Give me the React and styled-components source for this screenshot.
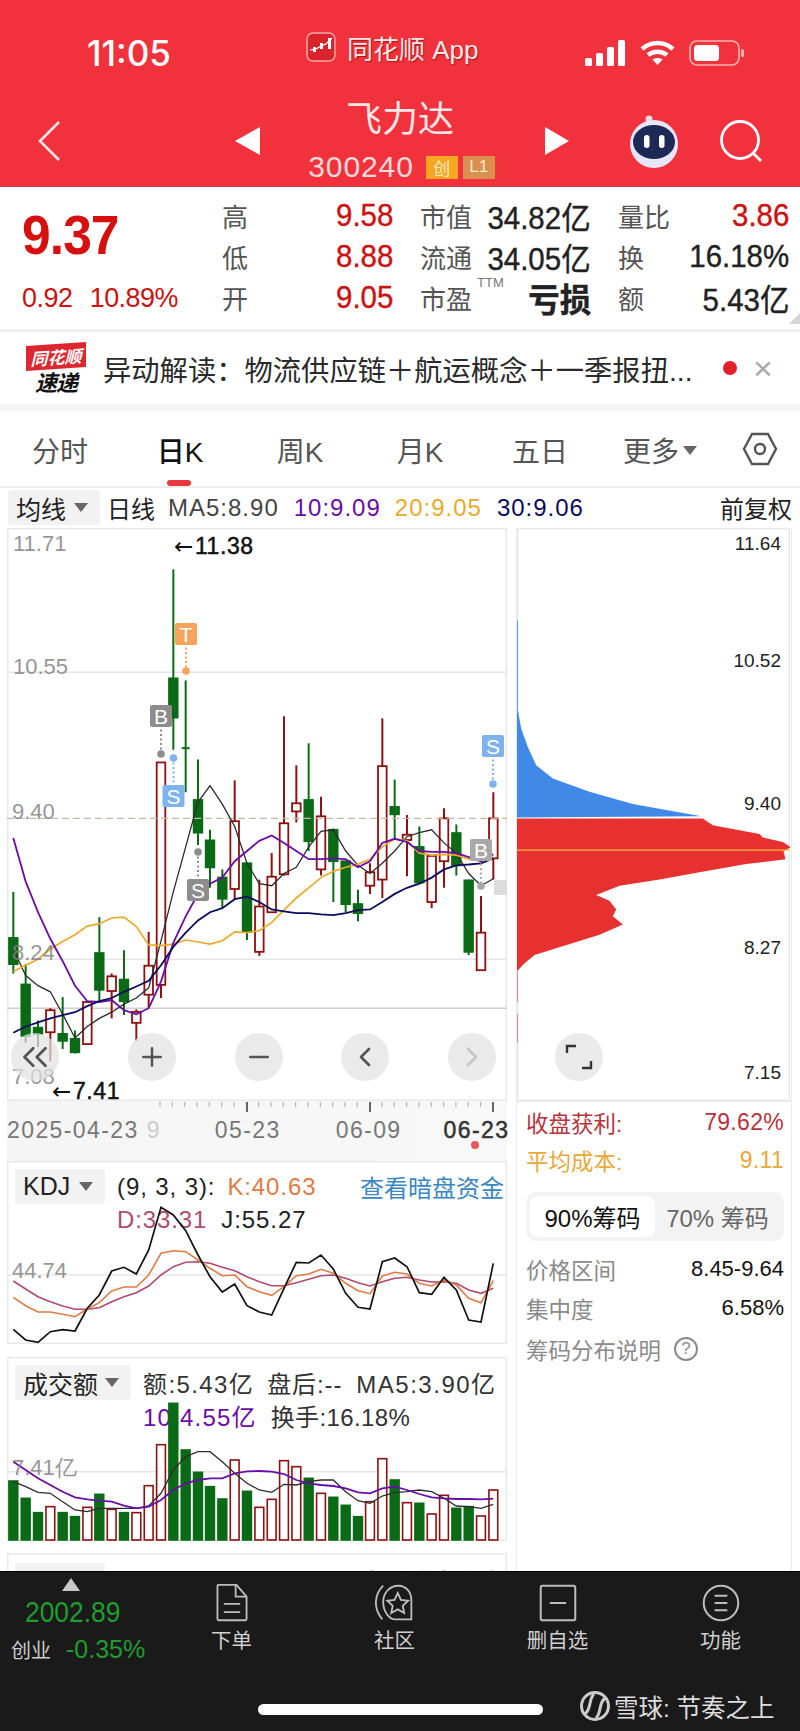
import React from 'react';
import styled, { createGlobalStyle } from 'styled-components';
import { Plus, Minus, ChevronLeft, ChevronRight, ChevronsLeft } from 'lucide-react';

const CJK = '"Liberation Sans", "Noto Sans CJK SC", sans-serif';

const Global = createGlobalStyle`
  html, body { margin: 0; padding: 0; background: #fff; }
  body { font-family: ${CJK}; }
  * { box-sizing: border-box; }
`;

const Page = styled.div`
  width: 800px; height: 1731px; display: flex; flex-direction: column; overflow: hidden; position: relative;
  background: #fff; color: #222;
`;

/* ---------- header ---------- */
const Header = styled.header`
  height: 187px; background: #f1323c; color: #fff; display: flex; flex-direction: column;
  border-bottom: 1px solid #c9434a;
`;
const StatusBar = styled.div`
  height: 96px; padding: 10px 0 0 87px; display: flex; align-items: center;
`;
const Clock = styled.div`
  font: 500 35px Inter, "Liberation Sans", sans-serif; width: 219px; color: #fff;
`;
const AppLabel = styled.div`
  display: flex; align-items: center; gap: 11px; width: 279px; margin-bottom: 12px; font-size: 26px; color: #fbeaea;
  text-shadow: 1px 1px 1px rgba(120, 0, 0, .6);
`;
const AppIcon = styled.svg`width: 30px; height: 30px; flex: none;`;
const StatusIcons = styled.div`display: flex; align-items: center; gap: 14px;`;
const Nav = styled.div`height: 90px; display: flex; align-items: center;`;
const BackSlot = styled.div`width: 235px; padding-left: 36px; display: flex;`;
const Tri = styled.div`
  width: 0; height: 0; border-top: 14px solid transparent; border-bottom: 14px solid transparent;
  ${p => p.$dir === 'left' ? 'border-right: 25px solid #fff;' : 'border-left: 24px solid #fff; margin-left: 5px;'}
`;
const TitleCol = styled.div`width: 280px; display: flex; flex-direction: column; align-items: center; gap: 9px; padding-top: 1px;`;
const Title = styled.div`font-size: 36px; line-height: 42px; color: #fde6e6;`;
const CodeRow = styled.div`display: flex; align-items: center; height: 34px; padding-left: 8px;`;
const Code = styled.span`font-size: 30px; letter-spacing: .9px; color: #fbdada; margin-right: 12px; font-family: "Liberation Sans", sans-serif;`;
const Badge = styled.span`
  width: 32px; height: 23px; margin-right: 5px; display: flex; align-items: center; justify-content: center; font-size: 17px;
  background: ${p => p.$bg}; color: #fde9c8;
`;
const RobotWrap = styled.svg`width: 52px; height: 56px; margin-left: 59px; flex: none;`;
const SearchWrap = styled.svg`width: 44px; height: 44px; margin-left: 39px; flex: none;`;

/* ---------- quote ---------- */
const Quote = styled.section`
  height: 145px; display: flex; border-bottom: 3px solid #eeeeee; position: relative;
`;
const PriceCol = styled.div`width: 222px; padding: 20px 0 0 22px; display: flex; flex-direction: column;`;
const Price = styled.div`
  font: 700 56px/56px "Liberation Sans", sans-serif; color: #d60f0f; letter-spacing: -1px; transform: scaleX(.92); transform-origin: left;
`;
const SubRow = styled.div`
  margin-top: 21px; height: 28px; display: flex; gap: 18px; font: 400 28px/28px "Liberation Sans", sans-serif; color: #cc1111;
  letter-spacing: -.5px; transform-origin: left; transform: scaleX(.96);
`;
const QuoteGrid = styled.div`
  display: grid; grid-template-columns: 171px 171px 171px; column-gap: 27px; grid-auto-rows: 41px; padding-top: 8px;
`;
const Cell = styled.div`display: flex; justify-content: space-between; align-items: center; position: relative;`;
const QLabel = styled.span`font-size: 26px; color: #555;`;
const QVal = styled.span`
  font: ${p => p.$bold ? 700 : 400} ${p => p.$bold ? 33 : 31}px "Liberation Sans", "Noto Sans CJK SC", sans-serif; color: ${p => p.$red ? '#cc1111' : '#222'};
  transform: scaleX(.95); transform-origin: right; white-space: nowrap; -webkit-text-stroke: .4px currentColor;
`;
const Sup = styled.sup`position: absolute; left: 57px; top: -1px; font-size: 13px; color: #777; line-height: 14px;`;
const Corner = styled.div`
  position: absolute; right: 0; bottom: 5px; width: 0; height: 0; border-left: 11px solid transparent; border-bottom: 11px solid #d6d6d6;
`;

/* ---------- news ---------- */
const News = styled.section`
  height: 72px; display: flex; align-items: center; padding-left: 25px; position: relative;
`;
const Logo = styled.div`width: 62px; margin-right: 16px; display: flex; flex-direction: column; align-items: center;`;
const LogoTag = styled.div`
  width: 60px; height: 25px; background: #dc2731; color: #fff; font: italic 700 17px/25px "Noto Sans CJK SC", sans-serif;
  text-align: center; transform: skewY(-4deg); white-space: nowrap;
`;
const LogoSub = styled.div`font: italic 700 22px/24px "Noto Sans CJK SC", sans-serif; color: #111; white-space: nowrap; letter-spacing: -1px;`;
const NewsText = styled.div`font-size: 28.3px; color: #2a2a2a; white-space: nowrap; width: 600px;`;
const NewsDot = styled.span`width: 14px; height: 14px; background: #e2202c; border-radius: 50%; margin-left: 20px; flex: none;`;
const NewsClose = styled.span`font: 300 34px/34px "Liberation Sans", sans-serif; color: #aaa; margin-left: 16px;`;
const Spacer = styled.div`height: 7px; background: #f5f5f5; flex: none;`;

/* ---------- tabs ---------- */
const Tabs = styled.nav`height: 77px; display: flex; border-bottom: 2px solid #eeeeee; flex: none;`;
const Tab = styled.div`
  width: 120px; height: 75px; padding-top: 3px; display: flex; align-items: center; justify-content: center; position: relative;
  font-size: 28px; color: ${p => p.$active ? '#111' : '#555'}; font-weight: ${p => p.$active ? 500 : 400};
  ${p => p.$active && `&::after { content: ''; position: absolute; left: 47px; bottom: 0; width: 24px; height: 6px; border-radius: 3px; background: #e8373f; }`}
`;
const Caret = styled.span`
  display: inline-block; width: 0; height: 0; margin-left: ${p => p.$ml || 4}px; border-left: 7px solid transparent; border-right: 7px solid transparent; border-top: 9px solid #666;
`;
const HexSlot = styled.div`width: 80px; display: flex; align-items: center; justify-content: center;`;

/* ---------- toolbar ---------- */
const Toolbar = styled.div`
  height: 40px; padding: 2px 8px 3px; display: flex; align-items: center; flex: none; font: 400 24px "Liberation Sans", "Noto Sans CJK SC", sans-serif;
`;
const Chip = styled.div`
  width: ${p => p.$w}px; height: 35px; background: #f2f2f2; border-radius: 3px; display: flex; align-items: center; justify-content: space-between;
  padding: 0 ${p => p.$pr || 12}px 0 8px; font-size: 25px; color: #222; flex: none;
`;
const TbText = styled.span`
  margin-left: ${p => p.$ml}px; color: ${p => p.$c || '#222'}; letter-spacing: ${p => p.$ls ?? 1}px; white-space: nowrap;
  ${p => p.$auto && 'margin-left: auto;'}
`;

/* ---------- main ---------- */
const Main = styled.main`flex: 1; min-height: 0; overflow: hidden; display: flex; padding-left: 7px; gap: 9px;`;
const LeftCol = styled.div`width: 500px; display: flex; flex-direction: column; flex: none;`;
const RightCol = styled.div`width: 276px; display: flex; flex-direction: column; flex: none; border: 1.5px solid #eaeaea; border-width: 0 1.5px;`;
const ChartBox = styled.div`
  width: ${p => p.$w || 500}px; height: 573px; position: relative; flex: none; box-shadow: inset 0 0 0 1.5px #e9e9e9;
`;
const FullSvg = styled.svg`position: absolute; left: 0; top: 0; pointer-events: none;`;
const AxisLabel = styled.span`
  position: absolute; left: ${p => p.$x}px; top: ${p => p.$y}px; transform: translateY(-50%); font: 400 ${p => p.$s || 22}px "Liberation Sans", sans-serif;
  color: ${p => p.$c || 'rgba(130,130,130,.85)'}; white-space: nowrap; ${p => p.$bold && '-webkit-text-stroke: .5px currentColor; letter-spacing: .6px;'}
`;
const ArrowGlyph = styled.span`font-family: "DejaVu Sans", sans-serif; -webkit-text-stroke: 0; margin-right: 1px;`;
const RightLabel = styled.span`
  position: absolute; right: 9px; top: ${p => p.$y}px; transform: translateY(-50%); font: 400 19px "Liberation Sans", sans-serif; color: #222;
`;
const BtnRow = styled.div`position: absolute; left: 4px; top: 505px; width: 485px; display: flex; justify-content: space-between;`;
const RoundBtn = styled.div`
  width: 48px; height: 48px; border-radius: 50%; background: rgba(226, 226, 226, .72); display: flex; align-items: center; justify-content: center; color: ${p => p.$c || '#555'};
  ${p => p.$mr && `margin-right: ${p.$mr}px;`}
  ${p => p.$abs && `position: absolute; left: 38px; top: 505px;`}
`;
const DateAxis = styled.div`height: 60px; flex: none; position: relative; background: linear-gradient(90deg, #f5f5f5, #f8f8f8);`;
const TickSvg = styled.svg`display: block;`;
const DateRow = styled.div`display: flex; height: 34px; align-items: center; font: 400 23px/34px "Liberation Sans", sans-serif; letter-spacing: 1.4px; color: #777;`;
const DateText = styled.span`
  margin-left: ${p => p.$ml || 0}px; color: ${p => p.$c || '#777'}; ${p => p.$strong && '-webkit-text-stroke: .5px currentColor;'} white-space: nowrap;
`;
const RedDot = styled.span`position: absolute; left: 464px; top: 40px; width: 8px; height: 8px; border-radius: 50%; background: #e8565c;`;

const Panel = styled.div`
  width: 500px; height: ${p => p.$h}px; flex: none; position: relative; box-shadow: inset 0 0 0 1.5px #e9e9e9; margin-bottom: ${p => p.$mb || 0}px;
  padding: ${p => p.$pt ?? 8}px 0 0 8px; display: flex; font: 400 24px "Liberation Sans", "Noto Sans CJK SC", sans-serif;
`;
const PanelText = styled.div`display: flex; flex-direction: column; flex: 1; padding: 1px 3px 0 ${p => p.$pl}px;`;
const PanelRow = styled.div`display: flex; height: 33px; align-items: center; white-space: nowrap;`;
const PText = styled.span`color: ${p => p.$c || '#222'}; letter-spacing: ${p => p.$ls ?? .9}px; margin-left: ${p => p.$ml || 0}px; ${p => p.$auto && 'margin-left: auto;'}`;

/* ---------- right stats ---------- */
const Stats = styled.div`
  border-top: 1.5px solid #eaeaea; padding: 0 7px 0 9px; flex: 1; font: 400 22.5px "Liberation Sans", "Noto Sans CJK SC", sans-serif;
`;
const StatRow = styled.div`
  height: ${p => p.$h}px; display: flex; justify-content: space-between; align-items: center; color: ${p => p.$c}; ${p => p.$top && `margin-top: ${p.$top}px;`}
`;
const StatVal = styled.span`color: ${p => p.$c || 'inherit'}; letter-spacing: ${p => p.$ls ?? .3}px; font-size: ${p => p.$s || 23}px;`;
const Seg = styled.div`
  height: 49px; margin: 13px 0 8px; background: #f3f3f3; border-radius: 10px; padding: 4px; display: flex; align-items: center; font-size: 24px;
`;
const SegItem = styled.div`
  width: 127px; height: 41px; border-radius: 8px; display: flex; align-items: center; justify-content: center; white-space: nowrap;
  ${p => p.$on ? 'background: #fff; color: #111;' : 'color: #666; margin-left: 0;'}
`;
const HelpRow = styled.div`display: flex; align-items: center; gap: 13px; color: #8a8a8a; height: 42px; padding-top: 2px;`;
const HelpIcon = styled.span`
  width: 24px; height: 24px; border-radius: 50%; border: 2px solid #8a8a8a; font-size: 17px; line-height: 20px; text-align: center;
`;

/* ---------- footer ---------- */
const Footer = styled.footer`
  height: 160px; background: #1a1a1a; flex: none; position: relative; display: flex; align-items: flex-start; border-top: 1px solid #000;
`;
const StockCol = styled.div`width: 150px; flex: none; position: relative; padding-top: 6px;`;
const FootTri = styled.div`
  width: 0; height: 0; margin-left: 62px; border-left: 9px solid transparent; border-right: 9px solid transparent; border-bottom: 13px solid #c8c8c8;
`;
const IndexVal = styled.div`
  margin: 1px 0 0 25px; font: 400 30px/40px "Liberation Sans", sans-serif; color: #1f9d2e; transform: scaleX(.88); transform-origin: left; white-space: nowrap;
`;
const IndexSub = styled.div`display: flex; align-items: center; padding-left: 11px; margin-top: 2px; height: 30px; white-space: nowrap;`;
const IndexName = styled.span`font-size: 20px; color: #ccc; flex: none;`;
const IndexPct = styled.span`font: 400 25px "Liberation Sans", sans-serif; color: #1f9d2e; margin-left: 15px;`;
const FootItem = styled.div`
  width: 163px; flex: none; display: flex; flex-direction: column; align-items: center; padding-top: 11px; color: #d0d0d0; font-size: 20.5px;
`;
const FootIcon = styled.svg`width: 40px; height: 40px; display: block; margin-bottom: 2px;`;
const FootLabel = styled.span`line-height: 32px; height: 32px;`;
const HomeBar = styled.div`
  position: absolute; left: 258px; top: 132px; width: 285px; height: 11px; border-radius: 6px; background: #fff;
`;
const Watermark = styled.div`
  position: absolute; left: 580px; top: 112px; display: flex; align-items: center; gap: 4px; font-size: 24.5px; color: #ddd; white-space: nowrap;
`;

/* ---------- data (traced from the picture) ---------- */
const X0 = [40, 77, 114, 151, 188, 225, 262, 298, 335, 372, 409, 446, 483, 520, 557, 594, 630, 667, 704, 741, 778, 815, 852, 889, 926, 963, 1000, 1037, 1074, 1110, 1147, 1184, 1221, 1258, 1295, 1332, 1369, 1406, 1443, 1480];
const X = i => X0[i] / 3;
const MY = v => 500 + v / 2.45;
const LY = v => 1140 + v / 3;
const CANDLES = [
  ['g', 960, 1073, 1137, 1160], ['g', 1137, 1187, 1313, 1330], ['g', 1275, 1293, 1308, 1340], ['r', 1245, 1250, 1304, 1375], ['g', 1218, 1308, 1325, 1345],
  ['g', 1300, 1320, 1353, 1356], ['r', 1228, 1230, 1333, 1335], ['g', 1022, 1110, 1200, 1228], ['r', 1160, 1167, 1203, 1270], ['g', 1103, 1175, 1228, 1262],
  ['r', 1248, 1254, 1281, 1325], ['r', 1058, 1141, 1212, 1245], ['r', 643, 643, 1188, 1220], ['g', 170, 437, 533, 612], ['g', 442, 608, 611, 716],
  ['g', 636, 735, 815, 845], ['g', 808, 834, 900, 950], ['g', 905, 925, 977, 1000], ['r', 687, 787, 953, 978], ['g', 888, 890, 1058, 1078],
  ['r', 930, 996, 1107, 1117], ['r', 865, 923, 1010, 1012], ['r', 530, 792, 917, 920], ['r', 650, 743, 763, 790], ['g', 596, 735, 836, 860],
  ['r', 727, 775, 905, 920], ['g', 805, 808, 885, 985], ['g', 885, 885, 990, 1010], ['g', 955, 990, 1012, 1032], ['r', 890, 912, 945, 965],
  ['r', 535, 652, 930, 975], ['g', 685, 752, 770, 828], ['r', 772, 820, 833, 922], ['g', 800, 850, 937, 940], ['r', 870, 872, 985, 1000],
  ['r', 755, 780, 885, 950], ['g', 795, 816, 895, 920], ['g', 930, 932, 1107, 1115], ['r', 970, 1060, 1152, 1153], ['r', 716, 780, 878, 930],
];
const MA5 = [1100, 1165, 1190, 1205, 1260, 1318, 1290, 1270, 1255, 1235, 1220, 1195, 1080, 960, 850, 740, 700, 745, 800, 890, 940, 945, 915, 900, 850, 812, 808, 860, 895, 915, 890, 860, 825, 815, 808, 840, 865, 915, 945, 928];
const MA10 = [828, 935, 1010, 1075, 1130, 1190, 1228, 1230, 1225, 1250, 1260, 1245, 1180, 1085, 1020, 965, 940, 925, 885, 860, 835, 822, 840, 860, 880, 880, 878, 880, 900, 885, 840, 830, 838, 860, 862, 862, 865, 875, 885, 868];
const MA20 = [1155, 1140, 1125, 1100, 1082, 1065, 1044, 1038, 1024, 1022, 1045, 1090, 1092, 1088, 1078, 1083, 1088, 1080, 1058, 1060, 1055, 1035, 1005, 975, 950, 925, 910, 900, 892, 880, 850, 830, 835, 865, 870, 868, 870, 880, 885, 875];
const MA30 = [1305, 1290, 1280, 1270, 1262, 1255, 1240, 1228, 1220, 1205, 1192, 1178, 1140, 1095, 1060, 1030, 1010, 1000, 978, 972, 985, 1003, 1008, 1012, 1012, 1015, 1017, 1012, 1005, 1003, 985, 965, 950, 940, 925, 905, 895, 893, 890, 878];
const KJ = [568, 600, 607, 575, 569, 573, 505, 465, 393, 382, 402, 330, 202, 225, 272, 345, 410, 456, 432, 497, 516, 525, 445, 367, 369, 345, 387, 460, 502, 507, 365, 354, 380, 458, 463, 412, 450, 540, 546, 370];
const KK = [472, 497, 516, 516, 523, 530, 507, 488, 453, 441, 441, 405, 340, 332, 335, 360, 385, 407, 405, 440, 455, 466, 440, 407, 402, 388, 400, 430, 452, 461, 408, 397, 402, 430, 438, 420, 435, 475, 488, 422];
const KD = [423, 447, 470, 485, 498, 508, 508, 503, 485, 470, 458, 438, 405, 380, 367, 365, 370, 382, 392, 410, 425, 437, 437, 428, 418, 407, 405, 415, 428, 438, 425, 415, 412, 420, 426, 425, 430, 450, 460, 445];
const VOL = [['g', 1023], ['g', 1075], ['g', 1118], ['r', 1100], ['g', 1118], ['g', 1130], ['r', 1102], ['g', 1063], ['r', 1108], ['g', 1118], ['r', 1118], ['r', 1037], ['r', 914], ['g', 790], ['g', 930], ['g', 997], ['g', 1040], ['g', 1077], ['r', 960], ['g', 1054], ['r', 1102], ['r', 1078], ['r', 962], ['r', 980], ['g', 1015], ['r', 1060], ['g', 1072], ['g', 1096], ['g', 1130], ['r', 1085], ['r', 956], ['g', 1020], ['r', 1088], ['g', 1090], ['r', 1122], ['r', 1066], ['g', 1105], ['g', 1100], ['r', 1128], ['r', 1050]];
const V5 = [1025, 1040, 1057, 1060, 1085, 1110, 1115, 1105, 1105, 1105, 1105, 1098, 1060, 990, 950, 935, 935, 965, 1000, 1030, 1050, 1057, 1033, 1035, 1025, 1020, 1020, 1055, 1082, 1090, 1068, 1058, 1055, 1050, 1055, 1075, 1098, 1100, 1105, 1093];
const V10 = [965, 990, 1015, 1035, 1055, 1072, 1078, 1082, 1085, 1097, 1105, 1100, 1080, 1050, 1030, 1020, 1015, 1015, 1000, 994, 993, 995, 1002, 1020, 1030, 1035, 1038, 1045, 1057, 1060, 1045, 1040, 1050, 1062, 1072, 1075, 1077, 1077, 1078, 1076];

const GREEN = '#0b6a16';
const DRED = '#8e1010';
const line = (arr, fy, start = 0) => arr.map((v, i) => `${X(i + start).toFixed(1)},${fy(v).toFixed(1)}`).join(' ');
const pts = (arr, fy) => arr.map(([a, b]) => `${(500 + a / 3).toFixed(1)},${fy(b).toFixed(1)}`).join(' ');

const Marker = ({ x, tagY, dotY, letter, fill }) => {
  const top = Math.min(tagY, dotY);
  const bottom = Math.max(tagY, dotY);
  return (
    <g>
      <line x1={x} x2={x} y1={top} y2={bottom} stroke={fill} strokeWidth="2" strokeDasharray="2 2.5" />
      <circle cx={x} cy={dotY} r="3.8" fill={fill} />
      <rect x={x - 11} y={tagY - 11} width="22" height="22" rx="2" fill={fill} />
      <text x={x} y={tagY + 7.5} fontSize="21" textAnchor="middle" fill="#fff" fontFamily="Liberation Sans, sans-serif">{letter}</text>
    </g>
  );
};

const Candles = () => (
  <>
    {CANDLES.map(([t, hi, top, bot, lo], i) => {
      const x = X(i);
      const c = t === 'g' ? GREEN : DRED;
      const isDoji = bot - top < 6;
      return (
        <g key={i}>
          <line x1={x} x2={x} y1={MY(hi)} y2={MY(lo)} stroke={c} strokeWidth="2" />
          {isDoji ? (
            <line x1={x - 4} x2={x + 4} y1={MY(top)} y2={MY(top)} stroke={c} strokeWidth="2" />
          ) : (
            <rect x={x - 4.3} y={MY(top)} width="8.6" height={MY(bot) - MY(top)} fill={t === 'g' ? c : '#fff'} stroke={c} strokeWidth="1.8" />
          )}
        </g>
      );
    })}
  </>
);

const MainChart = () => (
  <ChartBox>
    <FullSvg width="500" height="573" viewBox="7 528 500 573">
      <line x1="7" x2="507" y1={MY(422)} y2={MY(422)} stroke="#e6e6e6" strokeWidth="1.5" />
      <line x1="7" x2="507" y1={MY(1125)} y2={MY(1125)} stroke="#e6e6e6" strokeWidth="1.5" />
      <line x1="7" x2="507" y1={MY(1245)} y2={MY(1245)} stroke="#cfcfcf" strokeWidth="1.5" />
      <rect x="494" y="880" width="13" height="15" fill="#dcdcdc" />
      <Candles />
      <line x1="7" x2="507" y1={MY(780)} y2={MY(780)} stroke="#c9b8a2" strokeWidth="1.2" strokeDasharray="7 4" />
      <polyline points={line(MA5, MY)} fill="none" stroke="#2c2c2c" strokeWidth="1.3" />
      <polyline points={line(MA20, MY)} fill="none" stroke="#e9aa2c" strokeWidth="1.7" />
      <polyline points={line(MA10, MY)} fill="none" stroke="#6a0ca8" strokeWidth="1.8" />
      <polyline points={line(MA30, MY)} fill="none" stroke="#0b0b5e" strokeWidth="1.8" />
      <Marker x={161} tagY={716} dotY={754} letter="B" fill="#8d8d8d" />
      <Marker x={173.5} tagY={796} dotY={758} letter="S" fill="#7fb3ec" />
      <Marker x={186} tagY={634} dotY={671} letter="T" fill="#f6a35e" />
      <Marker x={198} tagY={890} dotY={852} letter="S" fill="#8d8d8d" />
      <Marker x={481} tagY={850} dotY={886} letter="B" fill="#a8a8a8" />
      <Marker x={493} tagY={746} dotY={784} letter="S" fill="#7fb3ec" />
    </FullSvg>
    <AxisLabel $x={6} $y={16}>11.71</AxisLabel>
    <AxisLabel $x={6} $y={139}>10.55</AxisLabel>
    <AxisLabel $x={5} $y={284}>9.40</AxisLabel>
    <AxisLabel $x={5} $y={425}>8.24</AxisLabel>
    <AxisLabel $x={5} $y={549}>7.08</AxisLabel>
    <AxisLabel $x={167} $y={18} $c="#111" $bold $s={23}><ArrowGlyph>←</ArrowGlyph>11.38</AxisLabel>
    <AxisLabel $x={45} $y={563} $c="#111" $bold $s={23}><ArrowGlyph>←</ArrowGlyph>7.41</AxisLabel>
    <BtnRow>
      <RoundBtn $mr={10}><ChevronsLeft size={42} strokeWidth={1.6} /></RoundBtn>
      <RoundBtn><Plus size={30} strokeWidth={2} /></RoundBtn>
      <RoundBtn><Minus size={30} strokeWidth={2} /></RoundBtn>
      <RoundBtn><ChevronLeft size={32} strokeWidth={2} /></RoundBtn>
      <RoundBtn $c="#c6c6c6"><ChevronRight size={32} strokeWidth={2} /></RoundBtn>
    </BtnRow>
  </ChartBox>
);

const Ticks = () => (
  <TickSvg width="500" height="12" viewBox="7 1101 500 12">
    {Array.from({ length: 28 }, (_, i) => {
      const x = 160 + i * 12.33;
      return <line key={i} x1={x} x2={x} y1="1102" y2="1107" stroke="#b5b5b5" strokeWidth="1.2" />;
    })}
    {[247, 370, 493].map(x => <line key={x} x1={x} x2={x} y1="1102" y2="1112" stroke="#666" strokeWidth="2" />)}
  </TickSvg>
);

const KdjPanel = () => (
  <Panel $h={183} $mb={13}>
    <Chip $w={90}>KDJ<Caret /></Chip>
    <PanelText $pl={12}>
      <PanelRow>
        <PText>(9, 3, 3):</PText>
        <PText $c="#e07b45" $ml={12}>K:40.63</PText>
        <PText $c="#3b86c4" $auto $ls={0}>查看暗盘资金</PText>
      </PanelRow>
      <PanelRow>
        <PText $c="#b04a6e">D:33.31</PText>
        <PText $ml={14}>J:55.27</PText>
      </PanelRow>
    </PanelText>
    <FullSvg width="500" height="183" viewBox="7 1161 500 183">
      <line x1="7" x2="507" y1={LY(405)} y2={LY(405)} stroke="#e6e6e6" strokeWidth="1.5" />
      <polyline points={line(KD, LY)} fill="none" stroke="#b04a6e" strokeWidth="1.6" />
      <polyline points={line(KK, LY)} fill="none" stroke="#e07b45" strokeWidth="1.6" />
      <polyline points={line(KJ, LY)} fill="none" stroke="#111" strokeWidth="1.7" />
    </FullSvg>
    <AxisLabel $x={5} $y={110}>44.74</AxisLabel>
  </Panel>
);

const VolPanel = () => (
  <Panel $h={184} $mb={12}>
    <Chip $w={116}>成交额<Caret /></Chip>
    <PanelText $pl={12}>
      <PanelRow>
        <PText $c="#333" $ls={1.4}>额:5.43亿</PText>
        <PText $c="#333" $ml={13}>盘后:--</PText>
        <PText $c="#333" $ml={14} $ls={1.5}>MA5:3.90亿</PText>
      </PanelRow>
      <PanelRow>
        <PText $c="#6a0ca8" $ls={1.2}>10:4.55亿</PText>
        <PText $c="#333" $ml={14} $ls={.4}>换手:16.18%</PText>
      </PanelRow>
    </PanelText>
    <FullSvg width="500" height="184" viewBox="7 1357 500 184">
      <line x1="7" x2="507" y1={LY(995)} y2={LY(995)} stroke="#e6e6e6" strokeWidth="1.5" />
      {VOL.map(([t, top], i) => (
        <rect key={i} x={X(i) - 4.4} y={LY(top)} width="8.8" height={LY(1200) - LY(top)} fill={t === 'g' ? GREEN : '#fff'} stroke={t === 'g' ? GREEN : DRED} strokeWidth="1.6" />
      ))}
      <polyline points={line(V5, LY)} fill="none" stroke="#2c2c2c" strokeWidth="1.3" />
      <polyline points={line(V10, LY)} fill="none" stroke="#6a0ca8" strokeWidth="1.8" />
    </FullSvg>
    <AxisLabel $x={5} $y={111}>7.41亿</AxisLabel>
  </Panel>
);

const BLUE_PTS = [[52, 778], [52, 295], [55, 295], [55, 515], [65, 560], [85, 605], [110, 650], [160, 682], [270, 715], [400, 745], [605, 775]];
const RED_PTS = [[52, 780], [610, 780], [640, 797], [780, 818], [790, 827], [850, 838], [874, 851], [852, 860], [858, 880], [740, 892], [600, 912], [480, 930], [360, 945], [290, 968], [330, 982], [350, 1003], [340, 1020], [370, 1040], [300, 1065], [105, 1115], [75, 1135], [52, 1155]];

const ChipChart = () => (
  <ChartBox $w={273}>
    <FullSvg width="273" height="573" viewBox="517.5 528 273 573">
      <polygon points={pts(BLUE_PTS, MY)} fill="#4189e6" />
      <polygon points={pts(RED_PTS, MY)} fill="#e73030" />
      <line x1="517.3" x2="517.3" y1={MY(1155)} y2={MY(1230)} stroke="#b8585c" strokeWidth="1.6" />
      <line x1="517.3" x2="517.3" y1={MY(1260)} y2={MY(1330)} stroke="#b8585c" strokeWidth="1.6" />
      <line x1="517" x2="790" y1={MY(858)} y2={MY(858)} stroke="#f3b63a" strokeWidth="1.3" />
    </FullSvg>
    <RightLabel $y={16}>11.64</RightLabel>
    <RightLabel $y={133}>10.52</RightLabel>
    <RightLabel $y={276}>9.40</RightLabel>
    <RightLabel $y={420}>8.27</RightLabel>
    <RightLabel $y={545}>7.15</RightLabel>
    <RoundBtn $abs>
      <svg width="30" height="30" viewBox="0 0 30 30" fill="none" stroke="#333" strokeWidth="2.4">
        <path d="M3 11V4h9M27 19v7h-9" />
      </svg>
    </RoundBtn>
  </ChartBox>
);

const StatsBlock = () => (
  <Stats>
    <StatRow $h={38} $c="#b8323c" $top={1}><span>收盘获利:</span><StatVal>79.62%</StatVal></StatRow>
    <StatRow $h={38} $c="#e8a83a"><span>平均成本:</span><StatVal>9.11</StatVal></StatRow>
    <Seg>
      <SegItem $on>90%筹码</SegItem>
      <SegItem>70% 筹码</SegItem>
    </Seg>
    <StatRow $h={39} $c="#8a8a8a"><span>价格区间</span><StatVal $c="#111" $ls={0} $s={22}>8.45-9.64</StatVal></StatRow>
    <StatRow $h={39} $c="#8a8a8a"><span>集中度</span><StatVal $c="#111" $ls={0} $s={22}>6.58%</StatVal></StatRow>
    <HelpRow><span>筹码分布说明</span><HelpIcon>?</HelpIcon></HelpRow>
  </Stats>
);

const Cells = [
  ['高', '9.58', true], ['市值', '34.82亿'], ['量比', '3.86', true],
  ['低', '8.88', true], ['流通', '34.05亿'], ['换', '16.18%'],
  ['开', '9.05', true], ['市盈', '亏损'], ['额', '5.43亿'],
];

export default function App() {
  return (
    <Page>
      <Global />
      <Header>
        <StatusBar>
          <Clock>11:05</Clock>
          <AppLabel>
            <AppIcon viewBox="0 0 30 30">
              <rect x="1" y="1" width="28" height="28" rx="6" fill="#d9242e" stroke="#f7a9a9" strokeWidth="1.5" />
              <polyline points="4,18 10,17 15,14 20,12 26,6" fill="none" stroke="#fff" strokeWidth="1.2" />
              <rect x="7" y="15" width="3" height="5" fill="#fff" /><rect x="14" y="11" width="3" height="6" fill="#fff" /><rect x="22" y="6" width="3" height="11" fill="#fff" />
            </AppIcon>
            同花顺 App
          </AppLabel>
          <StatusIcons>
            <svg width="41" height="26" viewBox="0 0 41 26" fill="#fff">
              <rect x="0" y="18" width="7" height="8" rx="1.5" /><rect x="11" y="13" width="7" height="13" rx="1.5" />
              <rect x="22" y="7" width="7" height="19" rx="1.5" /><rect x="33" y="0" width="7" height="26" rx="1.5" />
            </svg>
            <svg width="35" height="26" viewBox="0 0 35 26" fill="none" stroke="#fff" strokeWidth="4.5">
              <path d="M2 9C11 1 24 1 33 9" /><path d="M8 15C13.500 10.500 21.500 10.500 27 15" />
              <path d="M17.500 25L12.500 19.500C15.500 17.500 19.500 17.500 22.500 19.500Z" fill="#fff" stroke="none" />
            </svg>
            <svg width="56" height="26" viewBox="0 0 56 26" fill="none">
              <rect x="1" y="1" width="49" height="24" rx="7" stroke="#f7b4b4" strokeWidth="1.6" />
              <rect x="5" y="5" width="25" height="16" rx="3.500" fill="#fff" />
              <rect x="52" y="9" width="3" height="8" rx="1.500" fill="#f7b4b4" />
            </svg>
          </StatusIcons>
        </StatusBar>
        <Nav>
          <BackSlot>
            <svg width="26" height="44" viewBox="0 0 26 44" fill="none" stroke="#fde6e6" strokeWidth="2.6"><path d="M23 3L4 22l19 19" /></svg>
          </BackSlot>
          <Tri $dir="left" />
          <TitleCol>
            <Title>飞力达</Title>
            <CodeRow>
              <Code>300240</Code>
              <Badge $bg="#f5a623">创</Badge>
              <Badge $bg="#d9904f">L1</Badge>
            </CodeRow>
          </TitleCol>
          <Tri $dir="right" />
          <RobotWrap viewBox="0 0 52 56">
            <circle cx="21" cy="6" r="3.500" fill="#f6d8e8" />
            <path d="M21 8 L24 14" stroke="#f6d8e8" strokeWidth="2" />
            <circle cx="26" cy="31" r="24" fill="#e8e6fb" />
            <ellipse cx="26" cy="29" rx="21" ry="17" fill="#1c2a55" />
            <rect x="16" y="22" width="5.500" height="13" rx="2.700" fill="#fff" />
            <rect x="31" y="22" width="5.500" height="13" rx="2.700" fill="#fff" />
          </RobotWrap>
          <SearchWrap viewBox="0 0 44 44" fill="none" stroke="#fff" strokeWidth="2.8">
            <circle cx="21" cy="21" r="18.500" /><path d="M34 34l8 8" />
          </SearchWrap>
        </Nav>
      </Header>

      <Quote>
        <PriceCol>
          <Price>9.37</Price>
          <SubRow><span>0.92</span><span>10.89%</span></SubRow>
        </PriceCol>
        <QuoteGrid>
          {Cells.map(([l, v, red], i) => (
            <Cell key={i}>
              <QLabel>{l}</QLabel>
              {l === '市盈' && <Sup>TTM</Sup>}
              <QVal $red={red} $bold={l === '市盈'}>{v}</QVal>
            </Cell>
          ))}
        </QuoteGrid>
        <Corner />
      </Quote>

      <News>
        <Logo>
          <LogoTag>同花顺</LogoTag>
          <LogoSub>速递</LogoSub>
        </Logo>
        <NewsText>异动解读：物流供应链＋航运概念＋一季报扭...</NewsText>
        <NewsDot />
        <NewsClose>×</NewsClose>
      </News>
      <Spacer />

      <Tabs>
        <Tab>分时</Tab>
        <Tab $active>日K</Tab>
        <Tab>周K</Tab>
        <Tab>月K</Tab>
        <Tab>五日</Tab>
        <Tab>更多<Caret /></Tab>
        <HexSlot>
          <svg width="36" height="36" viewBox="0 0 36 36" fill="none" stroke="#555" strokeWidth="2.4">
            <path d="M10 3h16l8 15-8 15H10L2 18z" /><circle cx="18" cy="18" r="5" />
          </svg>
        </HexSlot>
      </Tabs>

      <Toolbar>
        <Chip $w={92}>均线<Caret /></Chip>
        <TbText $ml={7} $ls={0}>日线</TbText>
        <TbText $ml={13} $c="#444">MA5:8.90</TbText>
        <TbText $ml={15} $c="#6a0ca8">10:9.09</TbText>
        <TbText $ml={14} $c="#e9aa2c">20:9.05</TbText>
        <TbText $ml={15} $c="#0b0b5e">30:9.06</TbText>
        <TbText $auto $ls={0}>前复权</TbText>
      </Toolbar>

      <Main>
        <LeftCol>
          <MainChart />
          <DateAxis>
            <Ticks />
            <DateRow>
              <DateText>2025-04-23</DateText>
              <DateText $ml={8} $c="#ccc">9</DateText>
              <DateText $ml={54}>05-23</DateText>
              <DateText $ml={55}>06-09</DateText>
              <DateText $ml={42} $c="#333" $strong>06-23</DateText>
            </DateRow>
            <RedDot />
          </DateAxis>
          <KdjPanel />
          <VolPanel />
          <Panel $h={60} $pt={10}>
            <Chip $w={90} />
            <PanelText $pl={0}>
              <PanelRow>
                <PText $c="#777" $auto $ls={0}>查看暗盘资金</PText>
              </PanelRow>
            </PanelText>
          </Panel>
        </LeftCol>
        <RightCol>
          <ChipChart />
          <StatsBlock />
        </RightCol>
      </Main>

      <Footer>
        <StockCol>
          <FootTri />
          <IndexVal>2002.89</IndexVal>
          <IndexSub><IndexName>创业</IndexName><IndexPct>-0.35%</IndexPct></IndexSub>
        </StockCol>
        <FootItem>
          <FootIcon viewBox="0 0 44 44" fill="none" stroke="#bdbdbd" strokeWidth="2">
            <path d="M7 2h20l11 13v25a1 1 0 0 1-1 1H7a1 1 0 0 1-1-1V3a1 1 0 0 1 1-1z" /><path d="M26 2v13h12" /><path d="M13 23h18M13 32h18" />
          </FootIcon>
          <FootLabel>下单</FootLabel>
        </FootItem>
        <FootItem>
          <FootIcon viewBox="0 0 44 44" fill="none" stroke="#bdbdbd" strokeWidth="2">
            <path d="M8 40C-2 28-1 13 9 3" /><path d="M26 3C16 3 9 11 9 21c0 12 8 19 13 19h18V19C40 10 34 3 26 3z" />
            <path d="M25 11l3.500 7.500 8 1-6 5.500 1.600 8-7.100-4-7.100 4 1.600-8-6-5.500 8-1z" />
          </FootIcon>
          <FootLabel>社区</FootLabel>
        </FootItem>
        <FootItem>
          <FootIcon viewBox="0 0 44 44" fill="none" stroke="#bdbdbd" strokeWidth="2.200">
            <rect x="3" y="3" width="38" height="38" rx="2" /><path d="M13 22h18" />
          </FootIcon>
          <FootLabel>删自选</FootLabel>
        </FootItem>
        <FootItem>
          <FootIcon viewBox="0 0 44 44" fill="none" stroke="#bdbdbd" strokeWidth="2.200">
            <circle cx="22" cy="22" r="19" /><path d="M15 14h14M15 22h14M15 30h14" />
          </FootIcon>
          <FootLabel>功能</FootLabel>
        </FootItem>
        <HomeBar />
        <Watermark>
          <svg width="30" height="44" viewBox="0 0 30 44" fill="none" stroke="#ccc" strokeWidth="3">
            <circle cx="15" cy="22" r="13.500" /><path d="M5 30C12 24 8 16 14 10M25 14c-7 6-3 14-9 20" />
          </svg>
          雪球: 节奏之上
        </Watermark>
      </Footer>
    </Page>
  );
}
